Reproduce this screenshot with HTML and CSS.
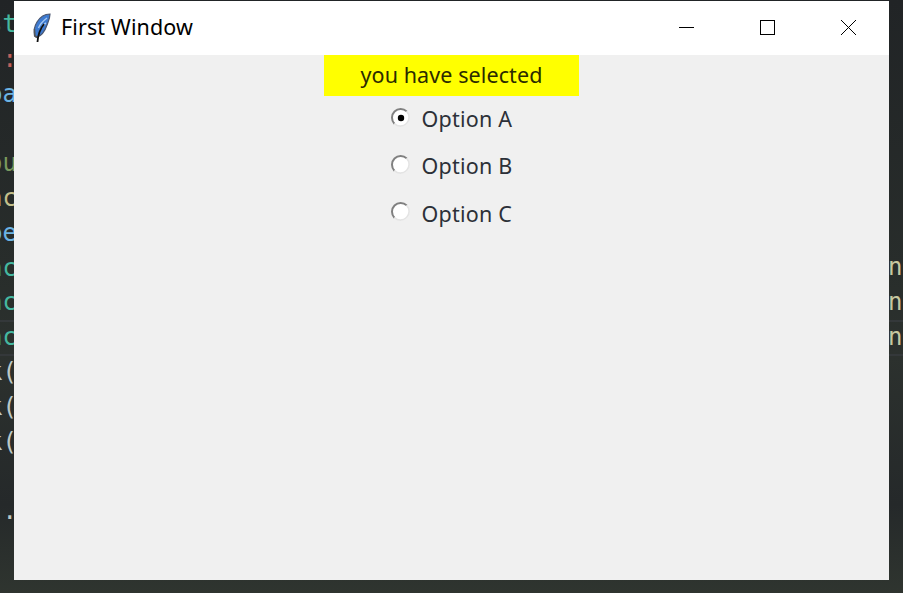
FILE: index.html
```html
<!DOCTYPE html>
<html lang="en">
<head>
    <meta charset="UTF-8">
    <meta name="viewport" content="width=device-width, initial-scale=1.0">
    <title>First Window</title>
    <link rel="stylesheet" href="styles.css">
</head>
<body>
    <div class="desktop">
        <div class="line-band"></div>

        <div class="code code-left">
            <div class="teal">st</div>
            <div class="red">:</div>
            <div class="blue">pa</div>
            <div>&nbsp;</div>
            <div class="green">ou</div>
            <div class="sand">nc</div>
            <div class="blue">pe</div>
            <div class="teal">nc</div>
            <div class="teal">nc</div>
            <div class="teal">nc</div>
            <div class="pale">k(</div>
            <div class="pale">k(</div>
            <div class="pale">k(</div>
            <div>&nbsp;</div>
            <div class="pale">..</div>
        </div>

        <div class="code code-right">
            <div>n</div>
            <div>n</div>
            <div>n</div>
        </div>

        <div class="window">
            <div class="titlebar">
                <svg class="feather" width="20" height="30" viewBox="0 0 20 30">
                    <path d="M18 1C13 1 8 4 5 9 2.500 13 1.500 18 2.500 23l2 1.500C9 23 13 18 15 12 16.500 8 18 5 18 1z" fill="#3d7ad0" stroke="#4a5670" stroke-width="1.200"/>
                    <path d="M15 5C11 8 8 11 6.500 15M14 10c-2 1-4 3-5 6" fill="none" stroke="#a6c8f0" stroke-width="1.400"/>
                    <path d="M12 11C8 16 6 21 5.500 29" fill="none" stroke="#101010" stroke-width="1.800"/>
                    <path d="M2.500 16 3 23l2 1" fill="none" stroke="#555" stroke-width="1.400"/>
                </svg>
                <span class="title">First Window</span>
                <div class="controls">
                    <svg class="control" width="81" height="54" viewBox="0 0 81 54"><path d="M33 26.500h15" stroke="#000" fill="none"/></svg>
                    <svg class="control" width="81" height="54" viewBox="0 0 81 54"><rect x="33.500" y="19.500" width="14" height="14" stroke="#000" fill="none"/></svg>
                    <svg class="control" width="81" height="54" viewBox="0 0 81 54"><path d="M33 19l15 15M48 19 33 34" stroke="#000" fill="none"/></svg>
                </div>
            </div>

            <div class="content">
                <div class="selected-label">you have selected</div>
                <div class="options">
                    <div class="option">
                        <svg class="radio" width="20" height="20" viewBox="0 0 20 20">
                            <circle cx="10" cy="10" r="8.500" fill="#fff"/>
                            <path d="M15.700 3.400A8.700 8.700 0 0 0 3.400 15.700" fill="none" stroke="#808080" stroke-width="2"/>
                            <path d="M15.700 3.400A8.700 8.700 0 0 1 3.400 15.700" fill="none" stroke="#e4e4e4" stroke-width="1.600"/>
                            <circle cx="10" cy="10" r="3.200" fill="#000"/>
                        </svg>
                        <span>Option A</span>
                    </div>
                    <div class="option">
                        <svg class="radio" width="20" height="20" viewBox="0 0 20 20">
                            <circle cx="10" cy="10" r="8.500" fill="#fff"/>
                            <path d="M15.700 3.400A8.700 8.700 0 0 0 3.400 15.700" fill="none" stroke="#808080" stroke-width="2"/>
                            <path d="M15.700 3.400A8.700 8.700 0 0 1 3.400 15.700" fill="none" stroke="#e4e4e4" stroke-width="1.600"/>
                        </svg>
                        <span>Option B</span>
                    </div>
                    <div class="option">
                        <svg class="radio" width="20" height="20" viewBox="0 0 20 20">
                            <circle cx="10" cy="10" r="8.500" fill="#fff"/>
                            <path d="M15.700 3.400A8.700 8.700 0 0 0 3.400 15.700" fill="none" stroke="#808080" stroke-width="2"/>
                            <path d="M15.700 3.400A8.700 8.700 0 0 1 3.400 15.700" fill="none" stroke="#e4e4e4" stroke-width="1.600"/>
                        </svg>
                        <span>Option C</span>
                    </div>
                </div>
            </div>
        </div>
    </div>
</body>
</html>
```

FILE: styles.css
```css
html, body {
    margin: 0;
    padding: 0;
    height: 100%;
    overflow: hidden;
}
.desktop {
    position: relative;
    width: 903px;
    height: 593px;
    overflow: hidden;
    background-color: #24282a;
    background-image:
        linear-gradient(180deg, rgba(36, 38, 41, 0) 85%, rgba(48, 54, 48, 0.9) 100%),
        linear-gradient(180deg, #212426 0%, #282d2b 45%, #2c312e 60%, #25292a 85%);
}
.line-band {
    position: absolute;
    left: 0;
    right: 0;
    top: 320px;
    height: 32px;
    border-top: 2px solid #34383a;
    border-bottom: 2px solid #34383a;
}
.code {
    position: absolute;
    font-family: "DejaVu Sans Mono", "Liberation Mono", monospace;
    font-size: 24px;
    line-height: 34.8px;
    white-space: nowrap;
}
.code-left {
    left: -20px;
    top: 7px;
    width: 37px;
    text-align: right;
    color: #d4d4d4;
}
.code-right {
    left: 888px;
    top: 250px;
    color: #c8c8a0;
}
.teal { color: #45b8a0; }
.red { color: #c0605a; }
.blue { color: #6cb4e4; }
.green { color: #7a9a5e; }
.sand { color: #c4bf8a; }
.pale { color: #bcc8c8; }
.window {
    position: absolute;
    left: 14px;
    top: 1px;
    width: 875px;
    height: 579px;
    display: flex;
    flex-direction: column;
    background-color: #f0f0f0;
}
.titlebar {
    height: 54px;
    flex-shrink: 0;
    display: flex;
    align-items: center;
    padding-left: 18px;
    background-color: #fff;
}
.feather {
    width: 20px;
    height: 30px;
    flex-shrink: 0;
}
.title {
    margin-left: 9px;
    margin-bottom: 4px;
    font-family: "Noto Sans", sans-serif;
    font-size: 21.500px;
    letter-spacing: 0.1px;
    color: #000;
}
.controls {
    display: flex;
    margin-left: auto;
}
.control {
    display: block;
}
.content {
    display: flex;
    flex-direction: column;
    align-items: center;
}
.selected-label {
    width: 255px;
    height: 41px;
    line-height: 40px;
    text-align: center;
    background-color: #ffff00;
    color: #2b2b00;
    font-family: "Noto Sans", sans-serif;
    font-size: 21.500px;
    letter-spacing: 0.1px;
}
.options {
    display: flex;
    flex-direction: column;
    gap: 14px;
    margin-top: 6px;
}
.option {
    display: flex;
    align-items: center;
    gap: 11px;
    height: 33.300px;
    font-family: "Noto Sans", sans-serif;
    font-size: 21.500px;
    letter-spacing: 0.2px;
    color: #2c3038;
}
.radio {
    width: 20px;
    height: 20px;
    flex-shrink: 0;
    margin-top: -2px;
}
```
